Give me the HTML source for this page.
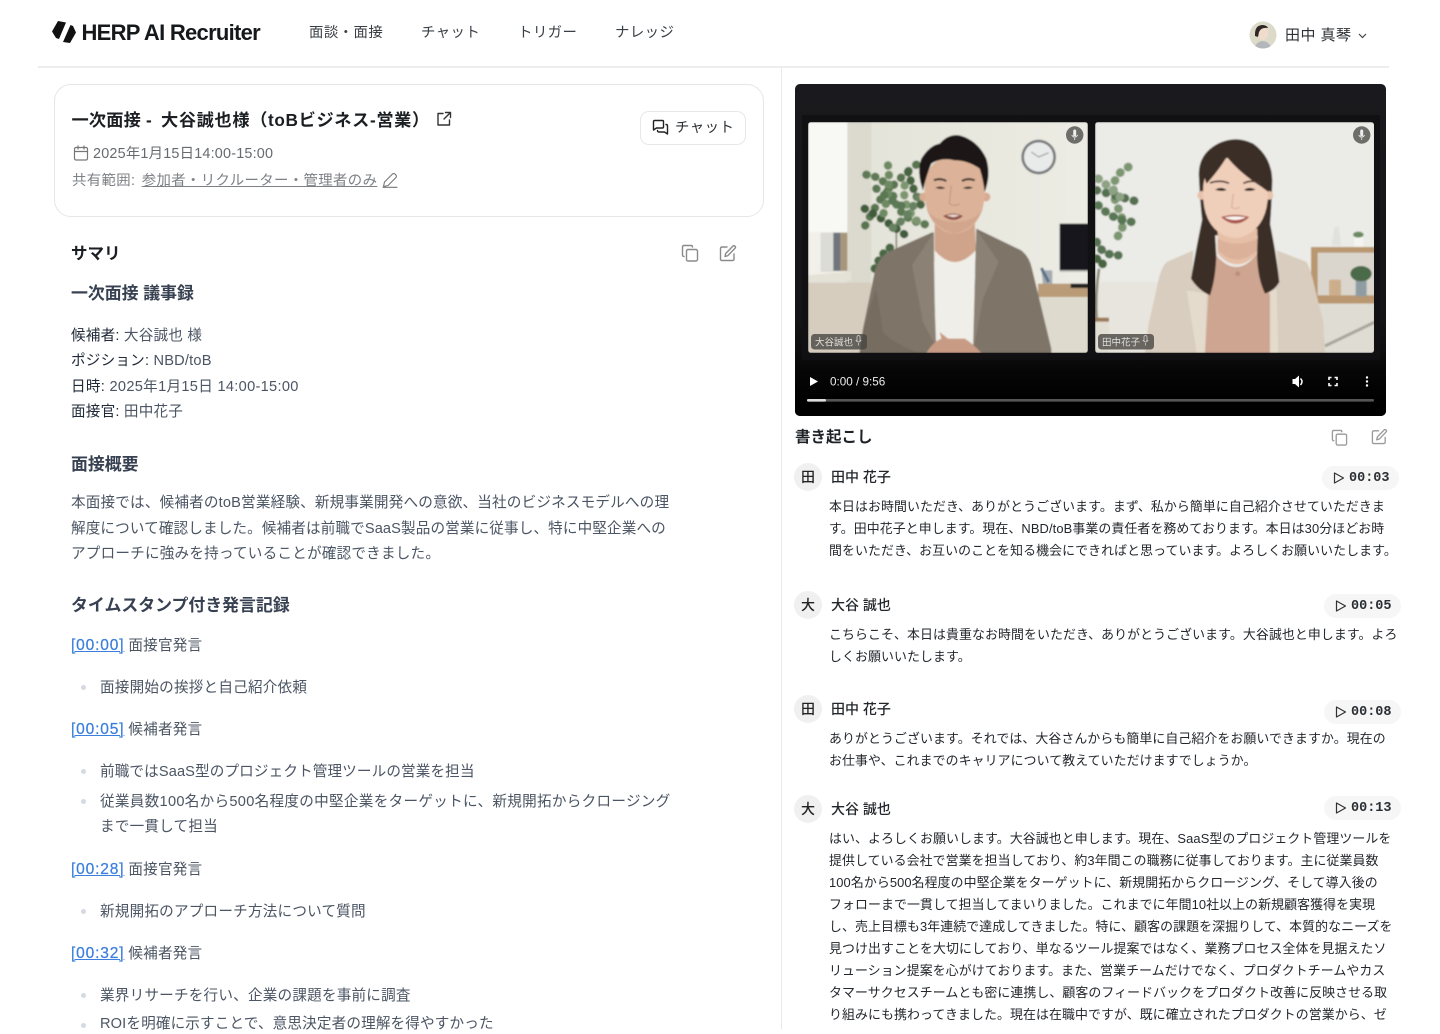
<!DOCTYPE html>
<html lang="ja">
<head>
<meta charset="utf-8">
<title>HERP AI Recruiter</title>
<style>
html,body{margin:0;padding:0;background:#fff}
body{width:1440px;height:1029px;overflow:hidden;position:relative;font-family:"Liberation Sans","Noto Sans CJK JP",sans-serif;color:#1f2328}
.t{position:absolute;white-space:nowrap;line-height:20px;height:20px}
.nav{font-size:14.4px;color:#3a3f45;letter-spacing:.45px}
.b{font-size:14.6px;letter-spacing:.2px;color:#4b5563}
.b b{font-weight:400;color:#1f2937}
.h{font-weight:700;font-size:16.9px;color:#374151}
.a{color:#3b7fdd;text-decoration:underline;text-decoration-thickness:1.4px;font-size:15.5px;letter-spacing:.85px;margin-right:4px;-webkit-text-stroke:.25px #3b7fdd}
.r{font-size:12.9px;letter-spacing:.11px;color:#23272c}
.n{font-size:14px;color:#23272c;font-weight:500}
.dot{position:absolute;width:5px;height:5px;border-radius:50%;background:#d5d9e0;left:81px}
.av{position:absolute;left:794px;width:28px;height:28px;border-radius:50%;background:#f0f0f0;text-align:center;line-height:28px;font-size:14px;font-weight:500;color:#222}
.ts{position:absolute;height:24px;width:77px;border-radius:12px;background:#f6f6f6;font:700 13.5px/26px "Liberation Mono",monospace;color:#2a2e33;padding-left:27px;box-sizing:border-box}
.ts svg{position:absolute;left:11px;top:6px}
svg{position:absolute;overflow:visible}
.ic{fill:none;stroke:#8a8a8a;stroke-width:1.4;stroke-linecap:round;stroke-linejoin:round}
</style>
</head>
<body>
<!-- header -->
<svg style="left:52px;top:21px" width="25" height="23" viewBox="0 0 25 23"><path d="M0 10.5 L6 0 L14 1.5 L7 18 L4 17 Z M24 11.5 L18 22 L11 21 L18.5 4 L21 5 Z" fill="#111"/></svg>
<div class="t" style="left:81.5px;top:22px;font-size:22px;font-weight:700;color:#16191c;letter-spacing:-.72px;line-height:22px">HERP AI Recruiter</div>
<div class="t nav" style="left:309px;top:23px">面談・面接</div>
<div class="t nav" style="left:421px;top:23px">チャット</div>
<div class="t nav" style="left:518px;top:23px">トリガー</div>
<div class="t nav" style="left:615px;top:23px">ナレッジ</div>
<svg style="left:1249px;top:21px" width="28" height="28" viewBox="0 0 28 28"><defs><clipPath id="ac"><circle cx="14" cy="14" r="13.5"/></clipPath></defs><g clip-path="url(#ac)"><rect width="28" height="28" fill="#dcdac8"/><path d="M5 28 Q7 21 13 20 Q20 20 23 28Z" fill="#b3b6ba"/><ellipse cx="14" cy="12.5" rx="5.5" ry="6.5" fill="#f0dccc"/><path d="M6 13 Q6 4 14 4 Q18 4.5 19 7 Q12 6 10 11 L9 16 L6 15Z" fill="#2e2825"/></g></svg>
<div class="t" style="left:1285px;top:26px;font-size:15px;color:#2c3034;letter-spacing:.45px">田中 真琴</div>
<svg style="left:1358px;top:33px" width="9" height="6" viewBox="0 0 9 6"><path d="M1 1 L4.5 4.5 L8 1" fill="none" stroke="#444" stroke-width="1.2"/></svg>
<div style="position:absolute;left:38px;top:66px;width:1351px;height:1.5px;background:#ededed"></div>
<div style="position:absolute;left:780.5px;top:67px;width:1.2px;height:962px;background:#e9e9e9"></div>

<!-- card -->
<div style="position:absolute;left:54px;top:84px;width:708px;height:131px;border:1px solid #e4e6e9;border-radius:17px"></div>
<div class="t" style="left:71.5px;top:110px;font-size:17.2px;font-weight:700;color:#1b1e22;letter-spacing:.2px">一次面接 -</div>
<div class="t" style="left:161px;top:110px;font-size:17.2px;font-weight:700;color:#1b1e22;letter-spacing:.65px">大谷誠也様（toBビジネス-営業）</div>
<svg class="ic" style="left:436px;top:111px;stroke:#333" width="16" height="16" viewBox="0 0 16 16"><path d="M7 2.5 H2 V14 H13.5 V9 M9.5 1.5 H14.5 V6.5 M14.5 1.5 L8 8"/></svg>
<svg class="ic" style="left:73px;top:145px;stroke:#777;stroke-width:1.2" width="16" height="16" viewBox="0 0 16 16"><rect x="1.5" y="2.5" width="13" height="12.5" rx="1.5"/><path d="M1.5 6.5 H14.5 M5 1 V4 M11 1 V4"/></svg>
<div class="t" style="left:93px;top:144px;font-size:14.4px;color:#666b70;letter-spacing:.2px">2025年1月15日14:00-15:00</div>
<div class="t" style="left:72px;top:171px;font-size:14.4px;color:#7d8186;letter-spacing:.36px">共有範囲: <span style="text-decoration:underline;margin-left:2px">参加者・リクルーター・管理者のみ</span></div>
<svg class="ic" style="left:382px;top:172px;stroke:#777;stroke-width:1.1" width="16" height="16" viewBox="0 0 16 16"><path d="M1.5 14.5 L2.5 10 L10.5 2 Q12 1 13.5 2.5 Q15 4 14 5.5 L6 13.5 Z M1 15.3 H15"/></svg>
<div style="position:absolute;left:640px;top:111px;width:104px;height:32px;border:1px solid #e6e7ea;border-radius:9px"></div>
<svg class="ic" style="left:652px;top:119px;stroke:#222;stroke-width:1.4" width="17" height="17" viewBox="0 0 17 17"><path d="M2.5 1.5 H10.5 Q11.5 1.5 11.5 2.5 V8 Q11.5 9 10.5 9 H4.5 L1.5 11 V2.5 Q1.5 1.5 2.5 1.5Z M14 5.5 Q15.5 5.5 15.5 7 V15 L12.5 13 H7 Q5.5 13 5.5 11.5"/></svg>
<div class="t" style="left:675px;top:118px;font-size:14.4px;color:#2c3034;letter-spacing:.5px">チャット</div>

<!-- left body -->
<div class="t" style="left:71px;top:244px;font-size:16.5px;font-weight:700;color:#1b1e22">サマリ</div>
<svg class="ic" style="left:681px;top:244px" width="18" height="18" viewBox="0 0 18 18"><rect x="5.5" y="5.5" width="11" height="11.5" rx="1.5"/><path d="M3 12.5 Q1.5 12.5 1.5 11 V3 Q1.5 1.5 3 1.5 H10 Q11.5 1.5 11.5 3"/></svg>
<svg class="ic" style="left:719px;top:244px" width="18" height="18" viewBox="0 0 18 18"><path d="M8 3 H3 Q1.5 3 1.5 4.5 V15 Q1.5 16.5 3 16.5 H13.5 Q15 16.5 15 15 V10 M6 12.5 L6.7 9.5 L14 2 Q15 1.2 16 2.2 Q17 3.2 16 4.2 L8.8 11.7 Z"/></svg>
<div class="t h" style="left:71px;top:284px">一次面接 議事録</div>
<div class="t b" style="left:71px;top:326px"><b>候補者:</b> 大谷誠也 様</div>
<div class="t b" style="left:71px;top:351px"><b>ポジション:</b> NBD/toB</div>
<div class="t b" style="left:71px;top:377px;letter-spacing:.3px"><b>日時:</b> 2025年1月15日 14:00-15:00</div>
<div class="t b" style="left:71px;top:402px"><b>面接官:</b> 田中花子</div>
<div class="t h" style="left:71px;top:455px">面接概要</div>
<div class="t b" style="left:71px;top:493px;letter-spacing:.17px">本面接では、候補者のtoB営業経験、新規事業開発への意欲、当社のビジネスモデルへの理</div>
<div class="t b" style="left:71px;top:519px;letter-spacing:.12px">解度について確認しました。候補者は前職でSaaS製品の営業に従事し、特に中堅企業への</div>
<div class="t b" style="left:71px;top:544px">アプローチに強みを持っていることが確認できました。</div>
<div class="t h" style="left:71px;top:596px">タイムスタンプ付き発言記録</div>
<div class="t b" style="left:71px;top:636px"><span class="a">[00:00]</span>面接官発言</div>
<span class="dot" style="top:684.5px"></span><div class="t b" style="left:100px;top:678px">面接開始の挨拶と自己紹介依頼</div>
<div class="t b" style="left:71px;top:720px"><span class="a">[00:05]</span>候補者発言</div>
<span class="dot" style="top:768.5px"></span><div class="t b" style="left:100px;top:762px;letter-spacing:.12px">前職ではSaaS型のプロジェクト管理ツールの営業を担当</div>
<span class="dot" style="top:798.5px"></span><div class="t b" style="left:100px;top:792px;letter-spacing:.29px">従業員数100名から500名程度の中堅企業をターゲットに、新規開拓からクロージング</div>
<div class="t b" style="left:100px;top:817px">まで一貫して担当</div>
<div class="t b" style="left:71px;top:860px"><span class="a">[00:28]</span>面接官発言</div>
<span class="dot" style="top:908.5px"></span><div class="t b" style="left:100px;top:902px">新規開拓のアプローチ方法について質問</div>
<div class="t b" style="left:71px;top:944px"><span class="a">[00:32]</span>候補者発言</div>
<span class="dot" style="top:992.5px"></span><div class="t b" style="left:100px;top:986px">業界リサーチを行い、企業の課題を事前に調査</div>
<span class="dot" style="top:1022.5px"></span><div class="t b" style="left:100px;top:1014px;letter-spacing:.14px">ROIを明確に示すことで、意思決定者の理解を得やすかった</div>

<!-- video -->
<svg style="left:795px;top:84px;border-radius:5px;overflow:hidden" width="591" height="332" viewBox="795 84 591 332">
<defs>
<linearGradient id="vb" x1="0" y1="0" x2="0" y2="1"><stop offset="0" stop-color="#1a1a1e"/><stop offset=".7" stop-color="#151517"/><stop offset="1" stop-color="#000"/></linearGradient>
<linearGradient id="vs" x1="0" y1="0" x2="0" y2="1"><stop offset="0" stop-color="#000" stop-opacity="0"/><stop offset="1" stop-color="#000"/></linearGradient>
<linearGradient id="w1" x1="0" y1="0" x2="1" y2="0"><stop offset="0" stop-color="#e2e1d6"/><stop offset="1" stop-color="#ecece4"/></linearGradient>
<clipPath id="c1"><rect x="808" y="122" width="280" height="231" rx="3"/></clipPath>
<clipPath id="c2"><rect x="1095" y="122" width="279" height="231" rx="3"/></clipPath>
<filter id="bl" x="-5%" y="-5%" width="110%" height="110%"><feGaussianBlur stdDeviation=".8"/></filter>
</defs>
<rect x="795" y="84" width="591" height="332" fill="url(#vb)"/>
<rect x="802" y="115" width="578" height="245" fill="#111113"/>

<g clip-path="url(#c1)"><g filter="url(#bl)"><g transform="translate(808 122) scale(.33333)">
<rect width="840" height="693" fill="url(#w1)"/>
<rect x="118" width="72" height="693" fill="#dcdace"/>
<rect width="118" height="330" fill="#f8f8f4"/>
<rect y="330" width="118" height="130" fill="#f1f0e9"/>
<rect x="38" y="332" width="38" height="118" fill="#dcdcd6"/><rect x="76" y="332" width="22" height="115" fill="#6f757b"/><rect x="98" y="332" width="20" height="115" fill="#a8957a"/>
<path d="M0 460 L130 448 L130 475 L0 485Z" fill="#e4e1d7"/>
<rect y="482" width="190" height="211" fill="#d6cdbf"/>
<rect x="690" y="520" width="150" height="173" fill="#dedbce"/>
<path d="M265 400 L265 300" stroke="#8b8a74" stroke-width="5"/>
<g fill="none" stroke-linecap="round" stroke-width="25">
<path d="M175 158 Q240 165 262 240 Q285 300 370 310" stroke="#5d7a55" stroke-dasharray="1 26"/>
<path d="M325 128 Q270 170 215 235 Q180 290 160 335" stroke="#587550" stroke-dasharray="1 29"/>
<path d="M300 150 Q320 220 345 260" stroke="#46643f" stroke-dasharray="1 25"/>
<path d="M170 260 Q240 300 300 345" stroke="#3f5c3a" stroke-dasharray="1 27"/>
<path d="M240 130 Q250 190 225 280" stroke="#6e8a62" stroke-dasharray="1 28"/>
<path d="M200 440 Q225 380 262 370" stroke="#4a6845" stroke-dasharray="1 25"/>
<path d="M290 190 Q280 250 330 300" stroke="#7d9670" stroke-dasharray="1 28"/>
<path d="M205 200 Q250 240 300 260" stroke="#5a7852" stroke-dasharray="1 29"/>
<path d="M330 225 Q300 290 250 320" stroke="#668260" stroke-dasharray="1 29"/>
</g>
<circle cx="692" cy="105" r="52" fill="#77787a"/><circle cx="692" cy="105" r="44" fill="#e9eaea"/><path d="M692 105 L670 90 M692 105 L722 92" stroke="#8a8a8a" stroke-width="3"/>
<rect x="755" y="305" width="85" height="140" fill="#14151a"/><rect x="755" y="445" width="85" height="5" fill="#c0c0bc"/>
<path d="M700 445 L733 445 L733 488 L705 488Z" fill="#a4acb2"/><path d="M700 438 L722 480" stroke="#5c7188" stroke-width="9"/>
<rect x="690" y="485" width="150" height="40" fill="#b99b78"/><rect x="788" y="485" width="52" height="13" fill="#222"/>
<path d="M380 295 L500 295 L505 420 L380 420Z" fill="#cfa48b"/>
<path d="M380 385 Q440 455 503 385 L500 693 L385 693Z" fill="#f0eee8"/>
<path d="M375 330 L240 390 Q210 410 200 450 L165 620 L155 693 L385 693 L378 500Z" fill="#7e7467"/>
<path d="M505 320 L640 385 Q665 405 672 440 L730 680 L730 693 L495 693 L500 500Z" fill="#7e7467"/>
<path d="M378 330 L312 430 L345 600 L382 670 L378 420Z" fill="#8b8174"/>
<path d="M505 322 L572 420 L525 530 L497 680 L502 420Z" fill="#8b8174"/>
<path d="M205 500 Q160 620 155 693 L330 693 Q250 660 225 630Z" fill="#766d61"/>
<path d="M355 693 Q375 660 400 650 L395 630 L420 650 L470 650 Q495 665 520 693Z" fill="#c89b84"/>
<circle cx="347" cy="225" r="13" fill="#d8ab92"/><circle cx="534" cy="225" r="13" fill="#d8ab92"/>
<path d="M350 190 Q345 280 395 320 Q440 350 485 320 Q535 280 530 190 Q525 110 440 100 Q355 110 350 190Z" fill="#dcb298"/>
<path d="M355 260 Q380 320 440 335 Q500 320 525 260 Q500 300 440 300 Q380 300 355 260Z" fill="#d2a68d"/>
<path d="M345 205 Q325 150 340 110 Q365 70 395 65 Q420 35 455 40 Q510 55 535 110 Q550 160 530 210 Q525 170 515 140 Q480 115 440 115 Q400 105 370 125 Q355 160 345 205Z" fill="#1c1917"/>
<path d="M378 175 Q395 167 415 177 M462 177 Q480 167 500 175" fill="none" stroke="#2b2220" stroke-width="6"/>
<path d="M382 197 Q397 190 412 198 Q397 204 382 197Z M465 198 Q480 190 495 197 Q480 204 465 198Z" fill="#2b2220"/>
<path d="M430 190 L424 245 Q440 255 455 245" fill="none" stroke="#c3957c" stroke-width="3"/>
<path d="M405 282 Q435 268 465 282 Q438 305 405 282Z" fill="#8a4a42"/><path d="M415 281 Q437 274 455 281 L437 286Z" fill="#e9d8cf"/>
</g></g></g>

<g clip-path="url(#c2)"><g filter="url(#bl)"><g transform="translate(1095 122) scale(.33333)">
<rect width="840" height="693" fill="#ebebe7"/>
<rect y="480" width="840" height="213" fill="#e7e5de"/>
<path d="M12 440 Q0 520 5 590" stroke="#8e8a78" stroke-width="8" fill="none"/>
<g fill="none" stroke-linecap="round" stroke-width="26">
<path d="M100 135 Q30 170 70 260 Q100 320 60 350" stroke="#7d9672" stroke-dasharray="1 28"/>
<path d="M5 205 Q60 220 130 240" stroke="#54704f" stroke-dasharray="1 28"/>
<path d="M10 250 Q60 300 120 300" stroke="#587752" stroke-dasharray="1 27"/>
<path d="M5 360 Q20 400 70 400" stroke="#567353" stroke-dasharray="1 26"/>
<path d="M10 170 Q50 200 80 230" stroke="#8ca283" stroke-dasharray="1 27"/>
<path d="M5 410 Q20 420 30 435" stroke="#46633f" stroke-dasharray="1 22"/>
</g>
<rect y="590" width="42" height="103" fill="#e3dfd4"/><rect y="587" width="42" height="12" fill="#9c7a5c"/>
<path d="M710 370 L738 370 L732 315 L718 315Z" fill="#e2e2dd"/>
<rect x="778" y="345" width="26" height="30" fill="#f4f4f0"/><ellipse cx="790" cy="338" rx="16" ry="9" fill="#6c8a60"/>
<rect x="648" y="375" width="192" height="170" fill="#b9976f"/>
<rect x="668" y="392" width="172" height="128" fill="#dbd6cd"/>
<rect x="672" y="522" width="168" height="20" fill="#b9976f"/>
<rect x="648" y="545" width="192" height="148" fill="#dfdcd4"/>
<rect x="702" y="473" width="36" height="48" rx="6" fill="#cdae8c"/>
<rect x="782" y="475" width="33" height="48" fill="#8f9da2"/>
<ellipse cx="798" cy="455" rx="32" ry="23" fill="#4c6a49"/>
<path d="M690 672 L840 600" stroke="#a9a69e" stroke-width="9"/>
<path d="M312 170 Q305 95 375 62 Q425 40 475 65 Q530 105 532 175 Q530 250 525 310 L488 340 L360 340 L322 300 Q315 240 312 170Z" fill="#3b2d27"/>
<path d="M295 385 L215 420 Q195 440 185 500 L160 610 L150 693 L330 693 L345 520 L290 470Z" fill="#d8cdbe"/>
<path d="M545 385 L635 420 Q650 450 660 500 L685 600 L690 693 L525 693 L510 515 L553 480Z" fill="#d8cdbe"/>
<path d="M275 505 L305 693 L330 693 L335 515Z" fill="#e4dbcd"/>
<path d="M545 500 L550 693 L522 693 L515 515Z" fill="#e4dbcd"/>
<path d="M355 390 Q425 480 490 390 L495 420 L525 520 L525 693 L330 693 L345 440Z" fill="#cea591"/>
<path d="M368 320 L368 395 Q425 460 487 395 L487 320Z" fill="#e6bfa7"/>
<path d="M368 385 Q425 440 487 385 L487 350 Q425 380 368 350Z" fill="#dcb199"/>
<path d="M322 290 Q305 370 288 470 Q310 505 345 520 Q362 470 364 400 L360 330Z" fill="#3b2d27"/>
<path d="M522 290 Q545 400 553 480 Q540 505 510 515 Q488 470 486 400 L488 330Z" fill="#3b2d27"/>
<circle cx="428" cy="455" r="7" fill="#b98d7a"/>
<circle cx="320" cy="220" r="13" fill="#e8c3ab"/><circle cx="522" cy="220" r="13" fill="#e8c3ab"/>
<path d="M325 190 Q318 290 370 330 Q420 365 470 330 Q525 290 518 190 Q510 110 420 105 Q335 110 325 190Z" fill="#f0cfba"/>
<path d="M395 105 Q375 140 335 185 Q320 150 335 115 Q365 90 395 105Z" fill="#3b2d27"/>
<path d="M392 100 Q430 150 500 195 L520 210 L530 150 Q510 95 450 85 Q415 85 392 100Z" fill="#3b2d27"/>
<path d="M345 183 Q375 172 402 184 M445 184 Q470 172 498 183" fill="none" stroke="#4a3830" stroke-width="5"/>
<path d="M360 203 Q378 192 395 204 Q378 210 360 203Z M447 204 Q463 192 482 203 Q463 210 447 204Z" fill="#2b211c"/>
<path d="M415 215 L410 255 Q422 265 435 255" fill="none" stroke="#d4a78f" stroke-width="3"/>
<path d="M378 285 Q420 272 463 285 Q422 325 378 285Z" fill="#a9544c"/>
<path d="M388 286 Q420 280 453 286 Q420 302 388 286Z" fill="#fbf6f2"/>
</g></g></g>

<rect x="811" y="334" width="56" height="15.5" rx="3.5" fill="#45433f" fill-opacity=".78"/>
<rect x="1098" y="334" width="56" height="15.5" rx="3.5" fill="#45433f" fill-opacity=".78"/>
<text x="815" y="345.5" font-family="Liberation Sans,Noto Sans CJK JP,sans-serif" font-size="9.5" fill="#dfdfdb">大谷誠也</text>
<text x="1102" y="345.5" font-family="Liberation Sans,Noto Sans CJK JP,sans-serif" font-size="9.5" fill="#dfdfdb">田中花子</text>
<path d="M857 337 a1.5 1.5 0 0 1 3 0 v3.5 a1.5 1.5 0 0 1 -3 0z M855.8 340 q2.7 4 5.4 0 M858.5 343 v2.5" fill="none" stroke="#ccc" stroke-width=".8"/>
<path d="M1144 337 a1.5 1.5 0 0 1 3 0 v3.5 a1.5 1.5 0 0 1 -3 0z M1142.8 340 q2.7 4 5.4 0 M1145.5 343 v2.5" fill="none" stroke="#ccc" stroke-width=".8"/>
<circle cx="1074.7" cy="135" r="8.7" fill="#6d6d6a"/><circle cx="1361.7" cy="135" r="8.7" fill="#6d6d6a"/>
<path d="M1073.2 131 a1.5 1.5 0 0 1 3 0 v4 a1.5 1.5 0 0 1 -3 0z" fill="#eee"/><path d="M1071.7 135 q3 4.5 6 0 M1074.7 138 v2" fill="none" stroke="#eee" stroke-width=".8"/>
<path d="M1360.2 131 a1.5 1.5 0 0 1 3 0 v4 a1.5 1.5 0 0 1 -3 0z" fill="#eee"/><path d="M1358.7 135 q3 4.5 6 0 M1361.7 138 v2" fill="none" stroke="#eee" stroke-width=".8"/>
<rect x="795" y="352" width="591" height="64" fill="url(#vs)"/>
<path d="M810 377 L818 381.5 L810 386Z" fill="#fff"/>
<text x="830" y="385.5" font-family="Liberation Sans,sans-serif" font-size="11.7" fill="#ececec">0:00 / 9:56</text>
<path d="M1292.5 379 h2.5 l4 -3.5 v12 l-4 -3.5 h-2.5z" fill="#fff"/><path d="M1300.5 378.5 q3 3 0 6.5" stroke="#fff" stroke-width="1.5" fill="none"/>
<path d="M1329 380 v-2.5 h2.5 M1334.5 377.5 h2.5 v2.5 M1337 383 v2.5 h-2.5 M1331.5 385.5 h-2.5 v-2.5" stroke="#fff" stroke-width="1.6" fill="none"/>
<circle cx="1367" cy="377.5" r="1.2" fill="#fff"/><circle cx="1367" cy="381.5" r="1.2" fill="#fff"/><circle cx="1367" cy="385.5" r="1.2" fill="#fff"/>
<rect x="807" y="399" width="567" height="2.6" rx="1.3" fill="#555"/>
<rect x="807" y="399" width="19" height="2.6" rx="1.3" fill="#dcdcdc"/>
</svg>

<!-- transcript -->
<div class="t" style="left:795px;top:428px;font-size:15.5px;font-weight:700;color:#1f2328">書き起こし</div>
<svg class="ic" style="left:1331px;top:429px;stroke:#9a9a9a" width="17" height="17" viewBox="0 0 18 18"><rect x="5.5" y="5.5" width="11" height="11.5" rx="1.5"/><path d="M3 12.5 Q1.5 12.5 1.5 11 V3 Q1.5 1.5 3 1.5 H10 Q11.5 1.5 11.5 3"/></svg>
<svg class="ic" style="left:1371px;top:428px;stroke:#9a9a9a" width="17" height="17" viewBox="0 0 18 18"><path d="M8 3 H3 Q1.5 3 1.5 4.5 V15 Q1.5 16.5 3 16.5 H13.5 Q15 16.5 15 15 V10 M6 12.5 L6.7 9.5 L14 2 Q15 1.2 16 2.2 Q17 3.2 16 4.2 L8.8 11.7 Z"/></svg>

<div class="av" style="top:463px">田</div>
<div class="t n" style="left:831px;top:467px">田中 花子</div>
<div class="ts" style="left:1322px;top:466px"><svg width="12" height="12" viewBox="0 0 12 12"><path d="M1.5 1 L10.5 6 L1.5 11Z" fill="none" stroke="#333" stroke-width="1.2" stroke-linejoin="round"/></svg>00:03</div>
<div class="t r" style="left:829px;top:497px">本日はお時間いただき、ありがとうございます。まず、私から簡単に自己紹介させていただきま</div>
<div class="t r" style="left:829px;top:519px">す。田中花子と申します。現在、NBD/toB事業の責任者を務めております。本日は30分ほどお時</div>
<div class="t r" style="left:829px;top:541px">間をいただき、お互いのことを知る機会にできればと思っています。よろしくお願いいたします。</div>

<div class="av" style="top:591px">大</div>
<div class="t n" style="left:831px;top:595px">大谷 誠也</div>
<div class="ts" style="left:1324px;top:594px"><svg width="12" height="12" viewBox="0 0 12 12"><path d="M1.5 1 L10.5 6 L1.5 11Z" fill="none" stroke="#333" stroke-width="1.2" stroke-linejoin="round"/></svg>00:05</div>
<div class="t r" style="left:829px;top:625px">こちらこそ、本日は貴重なお時間をいただき、ありがとうございます。大谷誠也と申します。よろ</div>
<div class="t r" style="left:829px;top:647px">しくお願いいたします。</div>

<div class="av" style="top:695px">田</div>
<div class="t n" style="left:831px;top:699px">田中 花子</div>
<div class="ts" style="left:1324px;top:700px"><svg width="12" height="12" viewBox="0 0 12 12"><path d="M1.5 1 L10.5 6 L1.5 11Z" fill="none" stroke="#333" stroke-width="1.2" stroke-linejoin="round"/></svg>00:08</div>
<div class="t r" style="left:829px;top:729px">ありがとうございます。それでは、大谷さんからも簡単に自己紹介をお願いできますか。現在の</div>
<div class="t r" style="left:829px;top:751px">お仕事や、これまでのキャリアについて教えていただけますでしょうか。</div>

<div class="av" style="top:795px">大</div>
<div class="t n" style="left:831px;top:799px">大谷 誠也</div>
<div class="ts" style="left:1324px;top:796px"><svg width="12" height="12" viewBox="0 0 12 12"><path d="M1.5 1 L10.5 6 L1.5 11Z" fill="none" stroke="#333" stroke-width="1.2" stroke-linejoin="round"/></svg>00:13</div>
<div class="t r" style="left:829px;top:829px">はい、よろしくお願いします。大谷誠也と申します。現在、SaaS型のプロジェクト管理ツールを</div>
<div class="t r" style="left:829px;top:851px">提供している会社で営業を担当しており、約3年間この職務に従事しております。主に従業員数</div>
<div class="t r" style="left:829px;top:873px">100名から500名程度の中堅企業をターゲットに、新規開拓からクロージング、そして導入後の</div>
<div class="t r" style="left:829px;top:895px">フォローまで一貫して担当してまいりました。これまでに年間10社以上の新規顧客獲得を実現</div>
<div class="t r" style="left:829px;top:917px">し、売上目標も3年連続で達成してきました。特に、顧客の課題を深掘りして、本質的なニーズを</div>
<div class="t r" style="left:829px;top:939px">見つけ出すことを大切にしており、単なるツール提案ではなく、業務プロセス全体を見据えたソ</div>
<div class="t r" style="left:829px;top:961px">リューション提案を心がけております。また、営業チームだけでなく、プロダクトチームやカス</div>
<div class="t r" style="left:829px;top:983px">タマーサクセスチームとも密に連携し、顧客のフィードバックをプロダクト改善に反映させる取</div>
<div class="t r" style="left:829px;top:1005px">り組みにも携わってきました。現在は在職中ですが、既に確立されたプロダクトの営業から、ゼ</div>
</body>
</html>
